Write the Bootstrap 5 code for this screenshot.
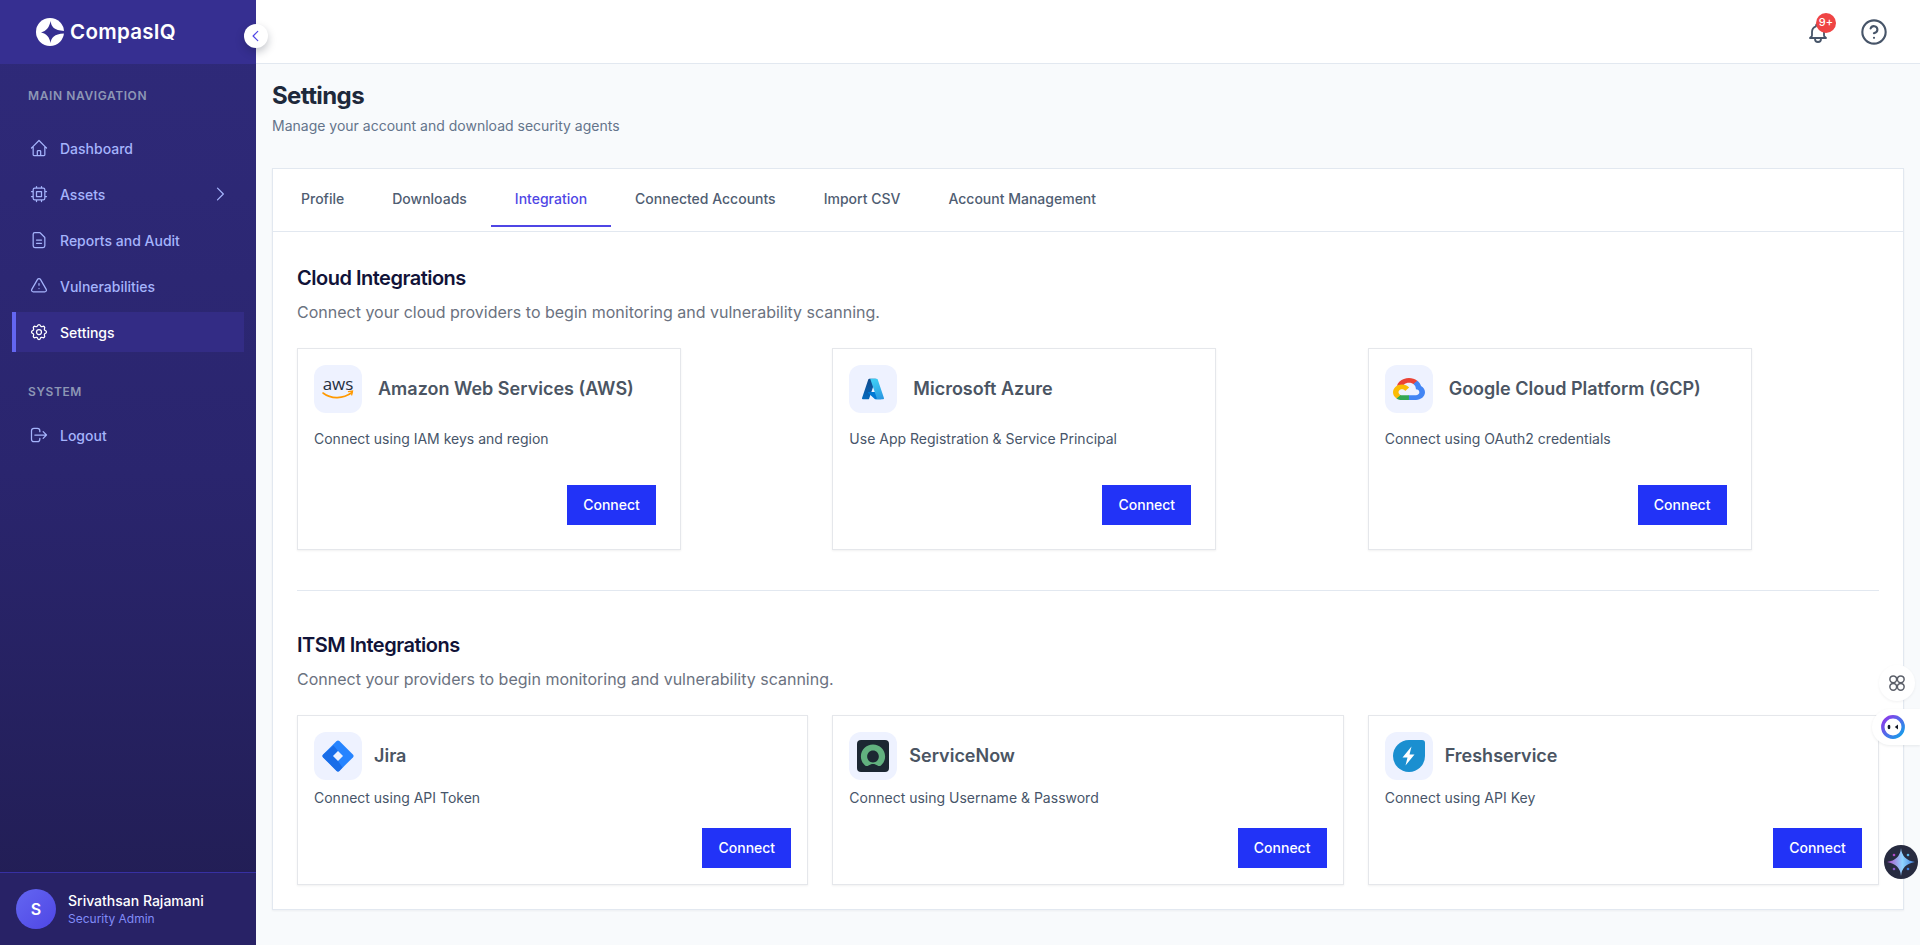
<!DOCTYPE html>
<html lang="en">
<head>
<meta charset="utf-8">
<title>Settings - CompasIQ</title>
<link href="https://cdn.jsdelivr.net/npm/bootstrap@5.3.0/dist/css/bootstrap.min.css" rel="stylesheet">
<style>
html,body{height:100%;}
body{font-family:Inter,"Liberation Sans",sans-serif;background:#f8fafc;color:#0f172a;overflow:hidden;}
.app-shell{height:945px;}
.side{width:256px;flex:none;background:linear-gradient(180deg,#2f2a7a 0%,#2a256e 50%,#211d52 100%);color:#a5b4fc;}
.brand-bar{height:64px;padding-left:36px;background:#362f91;gap:6px;}
.brand-name{font-size:20.5px;font-weight:600;color:#fff;letter-spacing:.3px;}
.nav-head{font-size:12px;font-weight:600;letter-spacing:.6px;color:#8d97b5;padding-left:28px;line-height:16px;}
.nav-head-a{margin-top:24px;margin-bottom:24px;}
.nav-head-b{margin-top:26px;margin-bottom:15px;}
.side-link{height:40px;margin:0 12px 6px;gap:11px;color:#a5b4fc;font-size:14px;font-weight:500;text-decoration:none;border-left:4px solid transparent;padding-left:13px;}
.side-link svg{width:20px;height:20px;flex:none;}
.side-link svg.side-chev{margin-right:14px;}
.side-link.is-on{background:#332c85;border-left-color:#6366f1;color:#fff;width:232px;}
.side-foot{height:73px;background:#282266;border-top:1px solid #3730a3;padding-left:16px;gap:12px;}
.avatar-dot{width:40px;height:40px;border-radius:50%;background:linear-gradient(135deg,#6366f1,#4f46e5);color:#fff;font-weight:600;font-size:16px;}
.who-name{font-size:14px;font-weight:500;color:#fff;line-height:20px;}
.who-role{font-size:12px;color:#818cf8;line-height:16px;}
.collapse-dot{position:absolute;left:244px;top:24px;width:24px;height:24px;border-radius:50%;background:#fff;box-shadow:0 4px 8px rgba(15,23,42,.25);z-index:5;}
.top-bar{height:64px;background:#fff;border-bottom:1px solid #e2e8f0;padding-right:32px;gap:30px;}
.bell-wrap{width:24px;height:24px;}
.bell-count{position:absolute;left:10px;top:-7px;width:20px;height:20px;border-radius:50%;background:#ef4444;color:#fff;font-size:11px;font-weight:500;}
.page-wrap{padding:16px 16px 0 16px;}
.page-title{font-size:24px;font-weight:700;line-height:32px;letter-spacing:-.025em;color:#1e293b;margin:0;}
.page-sub{font-size:14px;line-height:20px;color:#64748b;margin:4px 0 32px;}
.panel{background:#fff;border:1px solid #e2e8f0;box-shadow:0 1px 2px rgba(15,23,42,.05);}
.tab-strip{padding:3px 0 4px 4px;border-bottom:1px solid #e2e8f0;}
.tab-link{display:block;padding:17px 24px 16px;font-size:14px;font-weight:500;line-height:20px;color:#4f5d72;border-bottom:2px solid transparent;text-decoration:none;}
.tab-link.is-on{color:#4f46e5;border-bottom-color:#4f46e5;}
.panel-body{padding:32px 24px 24px;}
.sec-title{font-size:20px;font-weight:600;line-height:28px;letter-spacing:-.025em;color:#111338;margin:0 0 8px;}
.sec-desc{font-size:16px;line-height:24px;color:#6b7280;margin:0 0 24px;}
.sec-rule{border-top:1px solid #e2e8f0;margin:40px 0;opacity:1;}
.int-card{background:#fff;border:1px solid #e5e7eb;border-radius:0;box-shadow:0 1px 2px rgba(0,0,0,.06);}
.int-cloud{max-width:384px;height:202px;padding:16px;}
.int-itsm{height:170px;padding:16px;}
.logo-box{width:48px;height:48px;border-radius:12px;background:#eef2ff;flex:none;}
.int-name{font-size:18px;font-weight:600;color:#4b5563;line-height:28px;margin:0;}
.int-text{font-size:14px;line-height:20px;color:#475569;margin:0;}
.int-cloud .int-head{gap:16px;margin-bottom:16px;}
.int-itsm .int-head{gap:12px;margin-bottom:8px;}
.int-cloud .int-foot{margin-top:36px;padding-right:8px;}
.int-itsm .int-foot{margin-top:20px;}
.btn-link-up{width:89px;height:40px;padding:0;background:#2233f7;border:0;border-radius:0;color:#fff;font-size:14px;font-weight:500;line-height:40px;}
.btn-link-up:hover{background:#1c2bd6;color:#fff;}
.float-a{position:absolute;left:1879px;top:665px;width:36px;height:36px;border-radius:50%;background:#fff;box-shadow:0 1px 3px rgba(15,23,42,.06);}
.float-b{position:absolute;left:1872px;top:709px;width:48px;height:36px;border-radius:18px 0 0 18px;background:#fff;box-shadow:0 1px 3px rgba(15,23,42,.08);padding-left:9px;}
.float-c{position:absolute;left:1884px;top:845px;width:34px;height:34px;border-radius:50%;background:#272b40;}
</style>
</head>
<body>
<div class="app-shell d-flex position-relative">
  <aside class="side d-flex flex-column position-relative">
    <div class="brand-bar d-flex align-items-center">
      <svg width="28" height="28" viewBox="0 0 28 28"><circle cx="14" cy="14" r="14" fill="#fff"/><path d="M14.500 3C15.500 9 18 12.500 28.500 13V15.500C18 16 15.500 19.500 14.500 25 13.500 19 10.500 15.500 5 14.500 10.500 13 13.500 9 14.500 3z" fill="#362f91"/></svg>
      <span class="brand-name">CompasIQ</span>
    </div>
    <div class="nav-head nav-head-a">MAIN NAVIGATION</div>
    <a class="side-link d-flex align-items-center" href="#"><svg viewBox="0 0 24 24" fill="none" stroke="currentColor" stroke-width="1.5" stroke-linecap="round" stroke-linejoin="round"><path d="M3 12l2-2m0 0l7-7 7 7M5 10v10a1 1 0 001 1h3m10-11l2 2m-2-2v10a1 1 0 01-1 1h-3m-6 0a1 1 0 001-1v-4a1 1 0 011-1h2a1 1 0 011 1v4a1 1 0 001 1m-6 0h6"/></svg>Dashboard</a>
    <a class="side-link d-flex align-items-center" href="#"><svg viewBox="0 0 24 24" fill="none" stroke="currentColor" stroke-width="1.5" stroke-linecap="round" stroke-linejoin="round"><path d="M9 3v2m6-2v2M9 19v2m6-2v2M5 9H3m2 6H3m18-6h-2m2 6h-2M7 19h10a2 2 0 002-2V7a2 2 0 00-2-2H7a2 2 0 00-2 2v10a2 2 0 002 2zM9 9h6v6H9V9z"/></svg><span class="flex-grow-1">Assets</span><svg class="side-chev" viewBox="0 0 24 24" fill="none" stroke="currentColor" stroke-width="1.5" stroke-linecap="round" stroke-linejoin="round"><path d="M9 5l7 7-7 7"/></svg></a>
    <a class="side-link d-flex align-items-center" href="#"><svg viewBox="0 0 24 24" fill="none" stroke="currentColor" stroke-width="1.5" stroke-linecap="round" stroke-linejoin="round"><path d="M9 12h6m-6 4h6m2 5H7a2 2 0 01-2-2V5a2 2 0 012-2h5.586a1 1 0 01.707.293l5.414 5.414a1 1 0 01.293.707V19a2 2 0 01-2 2z"/></svg>Reports and Audit</a>
    <a class="side-link d-flex align-items-center" href="#"><svg viewBox="0 0 24 24" fill="none" stroke="currentColor" stroke-width="1.5" stroke-linecap="round" stroke-linejoin="round"><path d="M12 9v2m0 4h.01m-6.938 4h13.856c1.54 0 2.502-1.667 1.732-3L13.732 4c-.77-1.333-2.694-1.333-3.464 0L3.340 16c-.77 1.333.192 3 1.732 3z"/></svg>Vulnerabilities</a>
    <a class="side-link is-on d-flex align-items-center" href="#"><svg viewBox="0 0 24 24" fill="none" stroke="currentColor" stroke-width="1.5" stroke-linecap="round" stroke-linejoin="round"><path d="M10.325 4.317c.426-1.756 2.924-1.756 3.350 0a1.724 1.724 0 002.573 1.066c1.543-.94 3.310.826 2.370 2.370a1.724 1.724 0 001.065 2.572c1.756.426 1.756 2.924 0 3.350a1.724 1.724 0 00-1.066 2.573c.94 1.543-.826 3.310-2.370 2.370a1.724 1.724 0 00-2.572 1.065c-.426 1.756-2.924 1.756-3.350 0a1.724 1.724 0 00-2.573-1.066c-1.543.94-3.310-.826-2.370-2.370a1.724 1.724 0 00-1.065-2.572c-1.756-.426-1.756-2.924 0-3.350a1.724 1.724 0 001.066-2.573c-.94-1.543.826-3.310 2.370-2.370.996.608 2.296.07 2.572-1.065z"/><path d="M15 12a3 3 0 11-6 0 3 3 0 016 0z"/></svg>Settings</a>
    <div class="nav-head nav-head-b">SYSTEM</div>
    <a class="side-link d-flex align-items-center" href="#"><svg viewBox="0 0 24 24" fill="none" stroke="currentColor" stroke-width="1.5" stroke-linecap="round" stroke-linejoin="round"><path d="M17 16l4-4m0 0l-4-4m4 4H7m6 4v1a3 3 0 01-3 3H6a3 3 0 01-3-3V7a3 3 0 013-3h4a3 3 0 013 3v1"/></svg>Logout</a>
    <div class="side-foot d-flex align-items-center mt-auto">
      <div class="avatar-dot d-flex align-items-center justify-content-center">S</div>
      <div><div class="who-name">Srivathsan Rajamani</div><div class="who-role">Security Admin</div></div>
    </div>
    <button class="collapse-dot d-flex align-items-center justify-content-center border-0 p-0" type="button" aria-label="Collapse"><svg width="14" height="14" viewBox="0 0 24 24" fill="none" stroke="#4f46e5" stroke-width="2" stroke-linecap="round" stroke-linejoin="round"><path d="M15 4l-8 8 8 8"/></svg></button>
  </aside>

  <div class="flex-grow-1 d-flex flex-column" style="min-width:0">
    <header class="top-bar d-flex align-items-center justify-content-end">
      <div class="bell-wrap position-relative">
        <svg width="24" height="24" viewBox="0 0 24 24" fill="none" stroke="#475569" stroke-width="1.8" stroke-linecap="round" stroke-linejoin="round"><path d="M15 17h5l-1.405-1.405A2.032 2.032 0 0118 14.158V11a6.002 6.002 0 00-4-5.659V5a2 2 0 10-4 0v.341C7.670 6.165 6 8.388 6 11v3.159c0 .538-.214 1.055-.595 1.436L4 17h5m6 0v1a3 3 0 11-6 0v-1m6 0H9"/></svg>
        <span class="bell-count d-flex align-items-center justify-content-center">9+</span>
      </div>
      <svg width="28" height="28" viewBox="0 0 24 24" fill="none" stroke="#475569" stroke-width="1.8" stroke-linecap="round" stroke-linejoin="round"><circle cx="12" cy="12" r="10"/><path d="M9.090 9a3 3 0 0 1 5.830 1c0 2-3 3-3 3"/><path d="M12 17h.01"/></svg>
    </header>
    <main class="page-wrap">
      <h1 class="page-title">Settings</h1>
      <p class="page-sub">Manage your account and download security agents</p>
      <div class="panel">
        <ul class="nav tab-strip">
          <li class="nav-item"><a class="tab-link" href="#">Profile</a></li>
          <li class="nav-item"><a class="tab-link" href="#">Downloads</a></li>
          <li class="nav-item"><a class="tab-link is-on" href="#">Integration</a></li>
          <li class="nav-item"><a class="tab-link" href="#">Connected Accounts</a></li>
          <li class="nav-item"><a class="tab-link" href="#">Import CSV</a></li>
          <li class="nav-item"><a class="tab-link" href="#">Account Management</a></li>
        </ul>
        <div class="panel-body">
          <h2 class="sec-title">Cloud Integrations</h2>
          <p class="sec-desc">Connect your cloud providers to begin monitoring and vulnerability scanning.</p>
          <div class="row row-cols-3 g-4">
            <div class="col">
              <div class="int-card int-cloud">
                <div class="int-head d-flex align-items-center">
                  <div class="logo-box d-flex align-items-center justify-content-center">
                    <svg width="36" height="40" viewBox="0 0 36 40"><text x="18" y="21" text-anchor="middle" font-family="Open Sans, Liberation Sans, sans-serif" font-size="17" font-weight="400" fill="#252f3e">aws</text><path d="M3 24c8.500 6.500 20 6 29-.5" fill="none" stroke="#ff9900" stroke-width="1.600" stroke-linecap="round"/><path d="M28.500 22.700l4-.6-.8 3.800" fill="none" stroke="#ff9900" stroke-width="1.300" stroke-linecap="round"/></svg>
                  </div>
                  <h3 class="int-name">Amazon Web Services (AWS)</h3>
                </div>
                <p class="int-text">Connect using IAM keys and region</p>
                <div class="int-foot d-flex justify-content-end"><button class="btn btn-link-up" type="button">Connect</button></div>
              </div>
            </div>
            <div class="col">
              <div class="int-card int-cloud">
                <div class="int-head d-flex align-items-center">
                  <div class="logo-box d-flex align-items-center justify-content-center">
                    <svg width="24" height="24" viewBox="0 0 96 96"><defs><linearGradient id="az1" x1="58.970" y1="12.700" x2="31.940" y2="92.600" gradientUnits="userSpaceOnUse"><stop offset="0" stop-color="#114a8b"/><stop offset="1" stop-color="#0669bc"/></linearGradient><linearGradient id="az2" x1="52.600" y1="16.200" x2="82.300" y2="95.200" gradientUnits="userSpaceOnUse"><stop offset="0" stop-color="#3ccbf4"/><stop offset="1" stop-color="#2892df"/></linearGradient></defs><path fill="url(#az1)" d="M33.338 6.544h26.038l-27.030 80.087a4.152 4.152 0 0 1-3.933 2.824H8.149a4.145 4.145 0 0 1-3.928-5.470L29.404 9.368a4.152 4.152 0 0 1 3.934-2.825z"/><path fill="#0078d4" d="M71.175 60.261h-41.290a1.911 1.911 0 0 0-1.305 3.309l26.532 24.764a4.171 4.171 0 0 0 2.846 1.121h23.380z"/><path fill="url(#az2)" d="M66.595 9.364a4.145 4.145 0 0 0-3.928-2.820H33.648a4.146 4.146 0 0 1 3.928 2.820l25.184 74.620a4.146 4.146 0 0 1-3.928 5.472h29.020a4.146 4.146 0 0 0 3.927-5.472z"/></svg>
                  </div>
                  <h3 class="int-name">Microsoft Azure</h3>
                </div>
                <p class="int-text">Use App Registration &amp; Service Principal</p>
                <div class="int-foot d-flex justify-content-end"><button class="btn btn-link-up" type="button">Connect</button></div>
              </div>
            </div>
            <div class="col">
              <div class="int-card int-cloud">
                <div class="int-head d-flex align-items-center">
                  <div class="logo-box d-flex align-items-center justify-content-center">
                    <svg width="32" height="22" viewBox="0 0 256 206" preserveAspectRatio="none"><path fill="#EA4335" d="M170.252 56.819l22.253-22.253 1.483-9.370C153.437-11.677 88.976-7.496 52.420 33.920 42.267 45.423 34.734 59.764 30.717 74.573l7.970-1.123 44.505-7.340 3.436-3.513c19.797-21.742 53.270-24.667 76.128-6.168l7.496.39z"/><path fill="#4285F4" d="M224.205 73.918c-5.115-18.836-15.616-35.769-30.217-48.722l-31.232 31.232a55.513 55.513 0 0 1 20.379 44.037v5.544c15.350 0 27.797 12.445 27.797 27.796 0 15.352-12.446 27.485-27.797 27.485h-55.671l-5.466 5.934v33.340l5.466 5.231h55.671c39.930.311 72.553-31.494 72.864-71.424a72.303 72.303 0 0 0-31.794-60.453"/><path fill="#34A853" d="M71.870 205.796h55.593V161.290H71.870a27.275 27.275 0 0 1-11.399-2.498l-7.887 2.420-22.409 22.253-1.952 7.574c12.567 9.489 27.900 14.825 43.647 14.757"/><path fill="#FBBC05" d="M71.870 61.425C31.940 61.664-.237 94.228.001 134.159a72.301 72.301 0 0 0 28.222 56.880l32.248-32.246c-13.990-6.322-20.208-22.786-13.887-36.776 6.320-13.990 22.786-20.208 36.775-13.888a27.796 27.796 0 0 1 13.887 13.888l32.248-32.248A72.224 72.224 0 0 0 71.870 61.425"/></svg>
                  </div>
                  <h3 class="int-name">Google Cloud Platform (GCP)</h3>
                </div>
                <p class="int-text">Connect using OAuth2 credentials</p>
                <div class="int-foot d-flex justify-content-end"><button class="btn btn-link-up" type="button">Connect</button></div>
              </div>
            </div>
          </div>
          <hr class="sec-rule">
          <h2 class="sec-title">ITSM Integrations</h2>
          <p class="sec-desc">Connect your providers to begin monitoring and vulnerability scanning.</p>
          <div class="row row-cols-3 g-4">
            <div class="col">
              <div class="int-card int-itsm">
                <div class="int-head d-flex align-items-center">
                  <div class="logo-box d-flex align-items-center justify-content-center">
                    <svg width="32" height="32" viewBox="0 0 32 32"><path fill="#2684ff" d="M14.600 1.100a2 2 0 0 1 2.800 0l13.500 13.500a2 2 0 0 1 0 2.800L17.400 30.900a2 2 0 0 1-2.800 0L1.100 17.400a2 2 0 0 1 0-2.800z"/><path fill="#1565e0" d="M16 21l-5-5 5-5-4.500-5.500-10.400 9.100a2 2 0 0 0 0 2.800l13.500 13.500a2 2 0 0 0 2.800 0l3.100-3.400z" opacity=".75"/><path fill="#eef2ff" d="M16 11l5 5-5 5-5-5z"/></svg>
                  </div>
                  <h3 class="int-name">Jira</h3>
                </div>
                <p class="int-text">Connect using API Token</p>
                <div class="int-foot d-flex justify-content-end"><button class="btn btn-link-up" type="button">Connect</button></div>
              </div>
            </div>
            <div class="col">
              <div class="int-card int-itsm">
                <div class="int-head d-flex align-items-center">
                  <div class="logo-box d-flex align-items-center justify-content-center">
                    <svg width="32" height="32" viewBox="0 0 32 32"><rect width="32" height="32" rx="4" fill="#1c2732"/><path transform="translate(16 16.500) scale(1.100) translate(-16 -16.500)" fill="#62b17f" d="M16 5.500c-6.200 0-11 4.800-11 11 0 3.400 1.500 6.200 3.800 8.100.9.800 2.200.8 3.100.1 1.200-.9 2.600-1.400 4.100-1.400s2.900.5 4.100 1.400c.9.700 2.200.7 3.100-.1 2.300-1.900 3.800-4.700 3.800-8.100 0-6.200-4.800-11-11-11zm0 16.500c-3.100 0-5.300-2.400-5.300-5.400s2.200-5.500 5.300-5.500 5.300 2.500 5.300 5.500-2.200 5.400-5.300 5.400z"/></svg>
                  </div>
                  <h3 class="int-name">ServiceNow</h3>
                </div>
                <p class="int-text">Connect using Username &amp; Password</p>
                <div class="int-foot d-flex justify-content-end"><button class="btn btn-link-up" type="button">Connect</button></div>
              </div>
            </div>
            <div class="col">
              <div class="int-card int-itsm">
                <div class="int-head d-flex align-items-center">
                  <div class="logo-box d-flex align-items-center justify-content-center">
                    <svg width="32" height="32" viewBox="0 0 32 32"><path fill="#1a8fd0" d="M16 0h13a3 3 0 0 1 3 3v13a16 16 0 1 1-16-16z"/><path fill="#fff" d="M18.500 6.500 9.500 17.500h5l-2 8 9-11h-5z"/></svg>
                  </div>
                  <h3 class="int-name">Freshservice</h3>
                </div>
                <p class="int-text">Connect using API Key</p>
                <div class="int-foot d-flex justify-content-end"><button class="btn btn-link-up" type="button">Connect</button></div>
              </div>
            </div>
          </div>
        </div>
      </div>
    </main>
  </div>

  <div class="float-a d-flex align-items-center justify-content-center"><svg width="18" height="18" viewBox="0 0 24 24" fill="none" stroke="#5b5f69" stroke-width="2"><circle cx="7" cy="7" r="4.500"/><circle cx="17" cy="7" r="4.500"/><circle cx="7" cy="17" r="4.500"/><circle cx="17" cy="17" r="4.500"/></svg></div>
  <div class="float-b d-flex align-items-center"><svg width="24" height="24" viewBox="0 0 24 24"><defs><linearGradient id="ey" x1="0" y1="0" x2="1" y2="1"><stop offset="0" stop-color="#9333ea"/><stop offset="1" stop-color="#0ea5e9"/></linearGradient></defs><circle cx="12" cy="12" r="10.200" fill="#fff" stroke="url(#ey)" stroke-width="3.400"/><ellipse cx="8" cy="12" rx="1.400" ry="2.200" fill="#111827"/><path d="M17 9.500l-3.200 2.500 3.200 2.500z" fill="#111827"/></svg></div>
  <div class="float-c d-flex align-items-center justify-content-center"><svg width="34" height="34" viewBox="0 0 34 34"><defs><linearGradient id="sp" x1="0" y1="0" x2="1" y2="0"><stop offset="0" stop-color="#b04bc8"/><stop offset=".55" stop-color="#8fd3ff"/><stop offset="1" stop-color="#3d7fe0"/></linearGradient></defs><path fill="url(#sp)" d="M17 3Q18 15 31 17 18 19 17 31 16 19 3 17 16 15 17 3z"/><circle cx="10" cy="10" r="1.300" fill="#b04bc8"/><circle cx="24" cy="10" r="1.300" fill="#5db5e8"/><circle cx="10" cy="24" r="1.300" fill="#8a56c9"/><circle cx="24" cy="24" r="1.300" fill="#3d7fe0"/></svg></div>
</div>
<script src="https://cdn.jsdelivr.net/npm/bootstrap@5.3.0/dist/js/bootstrap.bundle.min.js"></script>
</body>
</html>
